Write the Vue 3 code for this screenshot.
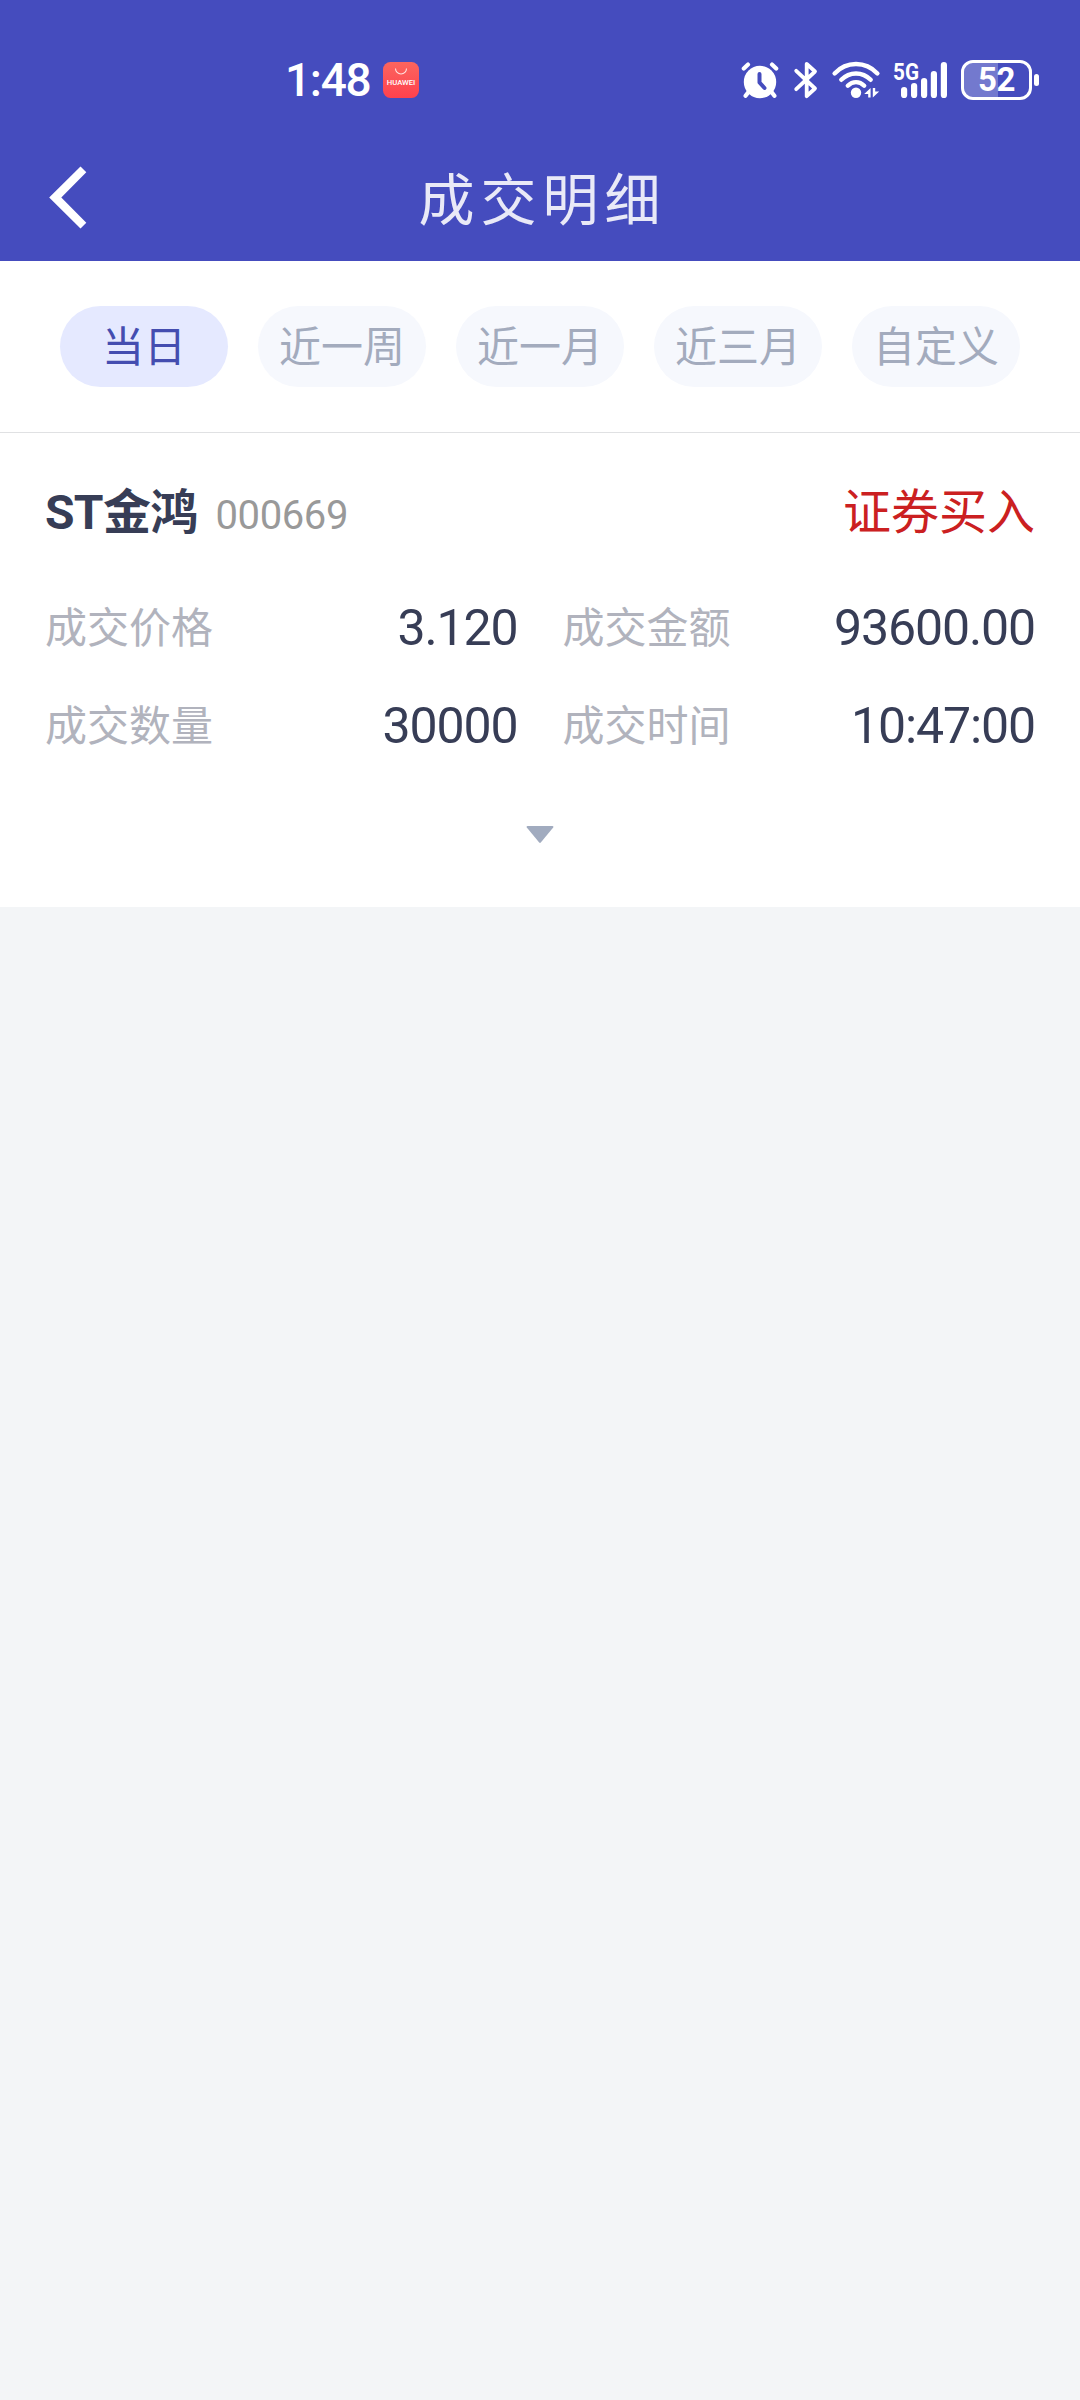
<template>
  <div class="page">
    <header class="header">
      <div class="status-bar">
        <div class="status-left">
          <span class="clock">1:48</span>
          <svg class="app-badge" width="36" height="36" viewBox="0 0 36 36">
            <defs>
              <linearGradient id="badge" x1="0" y1="0" x2="0" y2="1">
                <stop offset="0" stop-color="#fb655e" />
                <stop offset="1" stop-color="#ff414e" />
              </linearGradient>
            </defs>
            <rect width="36" height="36" rx="7.5" fill="url(#badge)" />
            <path d="M12.5 6.5a5.5 5.5 0 0 0 11 0" fill="none" stroke="#ffe3e0" stroke-width="1.1" />
            <text x="18" y="23" text-anchor="middle" textLength="28.5" lengthAdjust="spacingAndGlyphs" class="badge-text">HUAWEI</text>
          </svg>
        </div>

        <div class="status-right">
          <svg class="alarm" width="38" height="37" viewBox="0 0 38 37">
            <g stroke="#fff" stroke-width="4.2" stroke-linecap="round">
              <path d="M2.8 6.6 7 2.6M35.2 6.6 31 2.6M7.5 30 4.6 33.8M30.5 30l2.9 3.8" />
            </g>
            <circle cx="19" cy="20" r="16.2" fill="#fff" />
            <path d="M18.5 12v8.5l5 5.5" fill="none" stroke="#454cbe" stroke-width="4" stroke-linecap="round" stroke-linejoin="round" />
          </svg>
          <svg class="bluetooth" width="24" height="38" viewBox="0 0 24 38">
            <path d="M2.2 9.8 21 27.5 12.7 35.2V2.8L21 10.5 2.2 28.2" fill="none" stroke="#fff" stroke-width="3.8" stroke-linecap="round" stroke-linejoin="round" />
          </svg>
          <svg class="wifi" width="48" height="38" viewBox="0 0 48 38">
            <g fill="none" stroke="#fff" stroke-width="4.4" stroke-linecap="round">
              <path d="M2.6 12.4C14.5-.2 33.5-.2 45.4 12.4" />
              <path d="M9.3 18.8c8.3-8.5 21.1-8.5 29.4 0" />
              <path d="M15.8 24.7c4.7-4.8 11.7-4.8 16.4 0" />
            </g>
            <circle cx="24" cy="31.8" r="5.2" fill="#fff" />
            <path d="M38.6 27v9.4h-2.4V33h-4zM40.8 36.4V27h2.4v3.6h4z" fill="#fff" />
          </svg>
          <svg class="signal" width="56" height="38" viewBox="0 0 56 38">
            <text x="0" y="18.5" textLength="26" lengthAdjust="spacingAndGlyphs" class="signal-text">5G</text>
            <rect v-for="bar in signalBars" :key="bar.x" :x="bar.x" :y="37 - bar.h" width="6.2" :height="bar.h" rx="3.1" fill="#fff" />
          </svg>
          <div class="battery">
            <div class="battery-body">
              <div class="battery-level" :style="{ width: battery + '%' }"></div>
              <span class="battery-text">{{ battery }}</span>
            </div>
            <div class="battery-tip"></div>
          </div>
        </div>
      </div>

      <div class="nav-bar">
        <button class="back">
          <svg width="38" height="63" viewBox="0 0 38 63">
            <path d="M31.5.5 37.3 6.3 12.3 31.5 37.3 56.7 31.5 62.5.2 31.5z" fill="#fff" />
          </svg>
        </button>
        <h1 class="title">成交明细</h1>
      </div>
    </header>

    <div class="tabs">
      <button
        v-for="(tab, i) in tabs"
        :key="tab"
        class="tab"
        :class="{ 'tab-active': i === activeTab }"
        @click="activeTab = i"
      >{{ tab }}</button>
    </div>

    <section class="card">
      <div class="card-head">
        <span class="stock-name">{{ trade.name }}</span>
        <span class="stock-code">{{ trade.code }}</span>
        <span class="direction">{{ trade.direction }}</span>
      </div>
      <div class="fields">
        <div v-for="field in trade.fields" :key="field.label" class="field">
          <span class="label">{{ field.label }}</span>
          <span class="value">{{ field.value }}</span>
        </div>
      </div>
      <div class="expand">
        <svg width="28" height="18" viewBox="0 0 28 18">
          <path d="M1.5 0h25q1.5.3.7 1.5L14.8 16.5q-.8.8-1.6 0L.8 1.5Q0 .3 1.5 0z" fill="#a1abbf" />
        </svg>
      </div>
    </section>
  </div>
</template>

<script setup>
import { ref } from 'vue'

const battery = 52
const activeTab = ref(0)
const tabs = ['当日', '近一周', '近一月', '近三月', '自定义']

const signalBars = [
  { x: 8, h: 11 },
  { x: 18, h: 15 },
  { x: 28, h: 20 },
  { x: 37.8, h: 27 },
  { x: 47.8, h: 36 }
]

const trade = {
  name: 'ST金鸿',
  code: '000669',
  direction: '证券买入',
  fields: [
    { label: '成交价格', value: '3.120' },
    { label: '成交金额', value: '93600.00' },
    { label: '成交数量', value: '30000' },
    { label: '成交时间', value: '10:47:00' }
  ]
}
</script>

<style>
body {
  background: #f3f5f7;
}
</style>

<style scoped>
.page {
  min-height: 2400px;
  background: #f3f5f7;
  font-family: Roboto, 'Noto Sans CJK SC', sans-serif;
  color: #373d56;
}

button {
  border: none;
  padding: 0;
  background: none;
  font-family: inherit;
}

svg {
  display: block;
  overflow: visible;
}

.header {
  height: 261px;
  background: #454cbe;
}

.status-bar {
  height: 108px;
  padding: 26px 41px 0 285px;
  display: flex;
  justify-content: space-between;
  align-items: center;
}

.status-left,
.status-right {
  display: flex;
  align-items: center;
}

.clock {
  width: 98px;
  color: #fff;
  font-size: 46px;
  font-weight: 500;
  line-height: 54px;
  letter-spacing: -1.3px;
}

.badge-text {
  fill: #fff;
  font-size: 7.5px;
  font-weight: 500;
}

.bluetooth {
  margin-left: 15px;
}

.wifi {
  margin-left: 14px;
}

.signal {
  margin-left: 13px;
}

.signal-text {
  fill: #fff;
  font-size: 24px;
  font-weight: 700;
}

.battery {
  display: flex;
  align-items: center;
  gap: 2px;
  margin-left: 12px;
}

.battery-body {
  position: relative;
  width: 65px;
  height: 34px;
  border: 3px solid #fff;
  border-radius: 12px;
  overflow: hidden;
  text-align: center;
}

.battery-level {
  position: absolute;
  left: 0;
  top: 0;
  bottom: 0;
  background: rgba(255, 255, 255, 0.25);
}

.battery-text {
  position: relative;
  color: #fff;
  font-size: 33px;
  font-weight: 700;
  line-height: 34px;
  letter-spacing: -0.5px;
}

.battery-tip {
  width: 5px;
  height: 12px;
  border-radius: 2.5px;
  background: #fff;
}

.nav-bar {
  display: grid;
  grid-template-columns: 120px 1fr 120px;
  align-items: center;
  height: 127px;
}

.back {
  justify-self: start;
  margin-left: 49px;
}

.title {
  margin: 0;
  padding: 6px 0 0 5px;
  color: #e9e9f7;
  font-size: 56px;
  font-weight: 400;
  line-height: 80px;
  letter-spacing: 6px;
  text-align: center;
}

.tabs {
  display: flex;
  gap: 30px;
  padding: 45px 60px;
  background: #fff;
  border-bottom: 1px solid #e0e1e3;
}

.tab {
  flex: 1;
  height: 81px;
  padding-top: 2px;
  border-radius: 40.5px;
  background: #f6f8fd;
  color: #a3abbd;
  font-size: 42px;
  line-height: 79px;
}

.tab-active {
  background: #e5e9ff;
  color: #444db0;
}

.card {
  height: 474px;
  background: #fff;
}

.card-head {
  display: flex;
  align-items: baseline;
  height: 101px;
  padding: 44px 45px 0;
  line-height: 72px;
}

.stock-name {
  font-size: 48px;
  font-weight: 700;
  letter-spacing: -0.7px;
}

.stock-code {
  margin-left: 18px;
  color: #999;
  font-size: 40px;
  letter-spacing: -0.4px;
}

.direction {
  margin-left: auto;
  color: #cb2021;
  font-size: 48px;
}

.fields {
  display: grid;
  grid-template-columns: 1fr 1fr;
  column-gap: 45px;
  padding: 0 45px;
}

.field {
  display: flex;
  justify-content: space-between;
  align-items: center;
  height: 98px;
}

.label {
  padding-bottom: 5px;
  color: #b1b3bd;
  font-size: 42px;
}

.value {
  padding-top: 1px;
  font-size: 50px;
  letter-spacing: -1.1px;
}

.expand {
  display: flex;
  justify-content: center;
  padding-top: 52px;
}
</style>
